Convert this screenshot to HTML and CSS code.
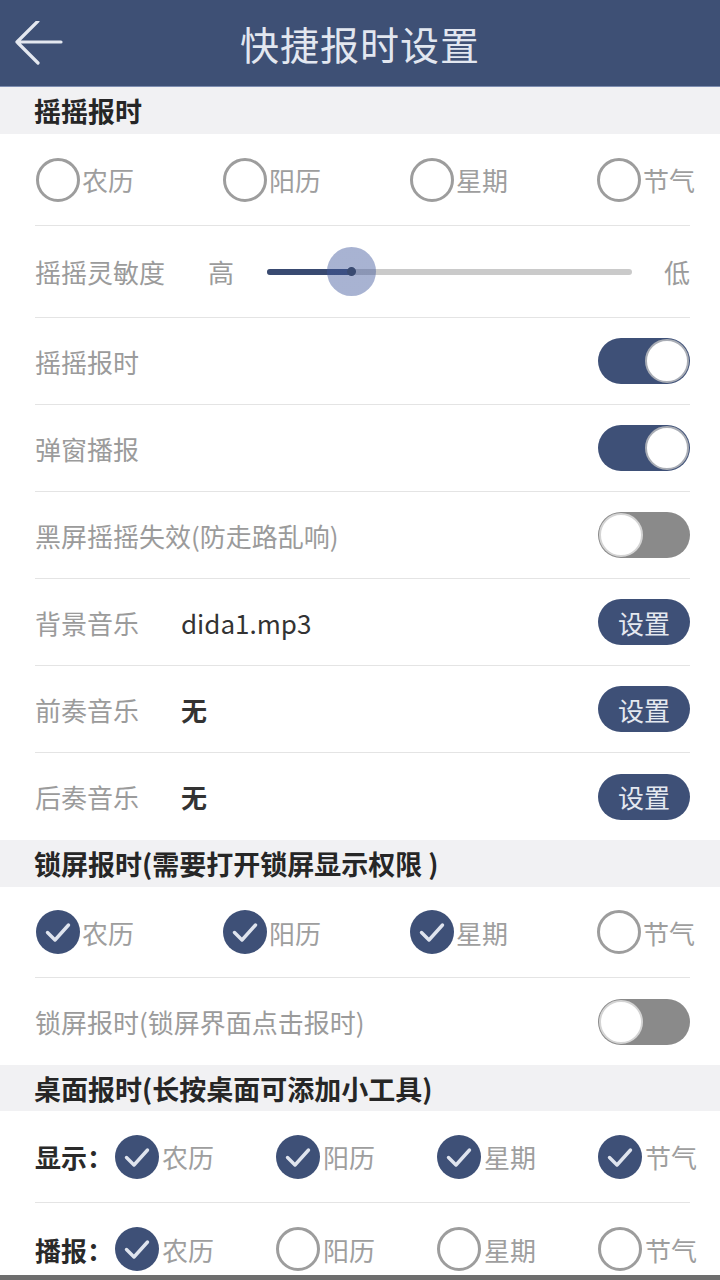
FILE: index.html
```html
<!DOCTYPE html>
<html lang="zh-CN">
<head>
  <meta charset="UTF-8" />
  <meta name="viewport" content="width=device-width, initial-scale=1.0"/>
  <title>快捷报时设置</title>
  <link rel="stylesheet" href="styles.css">
</head>
<body>
<div class="page">

<header class="topbar">
  <a class="back" href="#">
    <svg width="50" height="46" viewBox="0 0 50 46">
      <path d="M48 21H4M25 0L4 21L25 42" fill="none" stroke="#e4e8f0" stroke-width="3.2" stroke-linecap="round" stroke-linejoin="round"/>
    </svg>
  </a>
  <h1>快捷报时设置</h1>
  <span></span>
</header>

<main class="content">
  <div class="section-title">摇摇报时</div>
  <div class="group">
    <div class="row options">
      <label class="opt"><span class="radio"></span>农历</label>
      <label class="opt"><span class="radio"></span>阳历</label>
      <label class="opt"><span class="radio"></span>星期</label>
      <label class="opt"><span class="radio"></span>节气</label>
    </div>
    <div class="row slider-row">
      <span class="label sens">摇摇灵敏度</span>
      <span class="end high">高</span>
      <div class="track">
        <div class="fill" style="width:23.4%"><span class="thumb"></span></div>
      </div>
      <span class="end low">低</span>
    </div>
    <div class="row">
      <span class="label">摇摇报时</span>
      <span class="switch on"></span>
    </div>
    <div class="row">
      <span class="label">弹窗播报</span>
      <span class="switch on"></span>
    </div>
    <div class="row">
      <span class="label">黑屏摇摇失效(防走路乱响)</span>
      <span class="switch"></span>
    </div>
    <div class="row">
      <span class="label music">背景音乐</span>
      <span class="value">dida1.mp3</span>
      <button class="btn">设置</button>
    </div>
    <div class="row">
      <span class="label music">前奏音乐</span>
      <span class="value bold">无</span>
      <button class="btn">设置</button>
    </div>
    <div class="row">
      <span class="label music">后奏音乐</span>
      <span class="value bold">无</span>
      <button class="btn">设置</button>
    </div>
  </div>

  <div class="section-title">锁屏报时(需要打开锁屏显示权限 )</div>
  <div class="group">
    <div class="row options lock">
      <label class="opt"><span class="radio checked"></span>农历</label>
      <label class="opt"><span class="radio checked"></span>阳历</label>
      <label class="opt"><span class="radio checked"></span>星期</label>
      <label class="opt"><span class="radio"></span>节气</label>
    </div>
    <div class="row">
      <span class="label">锁屏报时(锁屏界面点击报时)</span>
      <span class="switch"></span>
    </div>
  </div>

  <div class="section-title short">桌面报时(长按桌面可添加小工具)</div>
  <div class="group">
    <div class="row options desk">
      <span class="row-name">显示：</span>
      <label class="opt"><span class="radio checked"></span>农历</label>
      <label class="opt"><span class="radio checked"></span>阳历</label>
      <label class="opt"><span class="radio checked"></span>星期</label>
      <label class="opt"><span class="radio checked"></span>节气</label>
    </div>
    <div class="row options desk">
      <span class="row-name">播报：</span>
      <label class="opt"><span class="radio checked"></span>农历</label>
      <label class="opt"><span class="radio"></span>阳历</label>
      <label class="opt"><span class="radio"></span>星期</label>
      <label class="opt"><span class="radio"></span>节气</label>
    </div>
  </div>
</main>

<div class="bottom-bar"></div>
</div>

<script>
  // draw the tick into every checked circle
  document.querySelectorAll('.radio.checked').forEach(el => {
    el.innerHTML = '<svg width="44" height="44" viewBox="0 0 44 44"><path d="M11.5 22.5L19 30L32.5 15" fill="none" stroke="#dfe4ee" stroke-width="3.4" stroke-linecap="round" stroke-linejoin="round"/></svg>';
  });
</script>
</body>
</html>
```

FILE: styles.css
```css
body {
  margin: 0;
  font-family: "Noto Sans CJK SC", "Noto Sans", sans-serif;
  background: #fff;
  color: #9b9b9b;
}
.page {
  width: 720px;
  height: 1280px;
  display: flex;
  flex-direction: column;
  overflow: hidden;
}
.topbar {
  height: 87px;
  flex-shrink: 0;
  background: #3e5075;
  display: grid;
  grid-template-columns: 90px 1fr 90px;
  align-items: center;
  box-sizing: border-box;
  border-bottom: 1px solid #7d8db0;
}
.back {
  display: flex;
  padding-left: 13px;
  padding-top: 2px;
}
.topbar h1 {
  margin: 0;
  text-align: center;
  font-size: 39px;
  font-weight: 400;
  color: #e2e7f0;
  letter-spacing: 1px;
}
.content {
  flex: 1;
  overflow: hidden;
}
.section-title {
  height: 47px;
  background: #f1f1f3;
  padding-left: 34px;
  display: flex;
  align-items: center;
  font-size: 27px;
  font-weight: 700;
  color: #262626;
}
.section-title.short {
  height: 46px;
}
.group {
  padding: 0 30px 0 35px;
}
.row {
  height: 87px;
  box-sizing: border-box;
  display: flex;
  align-items: center;
  border-bottom: 1px solid #e4e4e4;
  font-size: 26px;
}
.group .row:last-child {
  border-bottom: none;
}
.label {
  color: #9b9b9b;
}
.music {
  width: 146px;
}
.value {
  color: #333;
}
.value.bold {
  font-weight: 700;
}

/* option circles */
.options {
  height: 92px;
  display: grid;
  grid-template-columns: repeat(3, 187px) max-content;
  padding-left: 1px;
}
.options.lock {
  height: 91px;
}
.options.desk {
  grid-template-columns: 80px repeat(3, 161px) max-content;
  padding-left: 0;
}
.row-name {
  color: #2a2a2a;
  font-weight: 700;
  white-space: nowrap;
}
.opt {
  display: flex;
  align-items: center;
  gap: 2px;
  color: #9e9e9e;
  white-space: nowrap;
}
.desk .opt {
  gap: 3px;
}
.radio {
  width: 44px;
  height: 44px;
  box-sizing: border-box;
  border: 3px solid #9d9d9d;
  border-radius: 50%;
  flex-shrink: 0;
  display: flex;
  align-items: center;
  justify-content: center;
}
.radio.checked {
  background: #3e5077;
  border: none;
}

/* sensitivity slider */
.slider-row {
  height: 92px;
}
.sens {
  width: 173px;
}
.end {
  color: #9b9b9b;
}
.high {
  width: 59px;
}
.low {
  margin-left: 32px;
}
.track {
  flex: 1;
  height: 6px;
  background: #cacaca;
  border-radius: 3px;
  display: flex;
}
.fill {
  height: 100%;
  background: #394a71;
  border-radius: 3px 0 0 3px;
  display: flex;
  align-items: center;
  justify-content: flex-end;
}
.thumb {
  width: 49px;
  height: 49px;
  flex-shrink: 0;
  margin-right: -24px;
  border-radius: 50%;
  background: radial-gradient(circle, #394a71 0 4px, rgba(62, 86, 155, 0.45) 5px);
}

/* switches and buttons */
.switch {
  margin-left: auto;
  width: 92px;
  height: 46px;
  box-sizing: border-box;
  border-radius: 23px;
  background: #8a8a8a;
  display: flex;
  align-items: center;
  padding: 1px;
}
.switch::after {
  content: "";
  width: 44px;
  height: 44px;
  box-sizing: border-box;
  border-radius: 50%;
  background: #fff;
  border: 2px solid #d4d4d4;
}
.switch.on {
  background: #3e5077;
  justify-content: flex-end;
}
.switch.on::after {
  border-color: #a9adb5;
}
.btn {
  margin-left: auto;
  width: 92px;
  height: 46px;
  border: none;
  border-radius: 23px;
  background: #3e5077;
  color: #e4e8f0;
  font-family: inherit;
  font-size: 26px;
  padding: 0;
}
.bottom-bar {
  height: 5px;
  flex-shrink: 0;
  background: #6e6e6e;
}
```
